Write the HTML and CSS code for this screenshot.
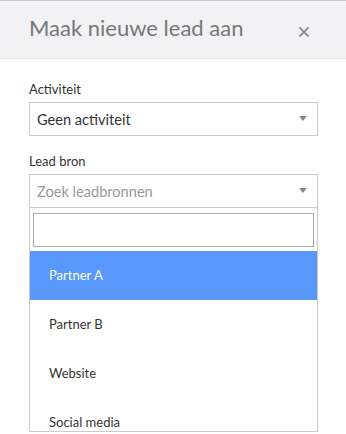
FILE: index.html
```html
<!DOCTYPE html>
<html lang="nl">
<head>
<meta charset="utf-8">
<title>Maak nieuwe lead aan</title>
<link rel="stylesheet" href="styles.css">
</head>
<body>
<div class="modal">
  <header class="modal-header">
    <h1 class="modal-title">Maak nieuwe lead aan</h1>
    <button class="close" aria-label="Sluiten">
      <svg width="12" height="12" viewBox="0 0 12 12"><path d="M1.5 1.5 L10.5 10.5 M10.5 1.5 L1.5 10.5" stroke="#7a7a7a" stroke-width="1.5" fill="none"/></svg>
    </button>
  </header>
  <div class="modal-body">
    <label class="field-label">Activiteit</label>
    <div class="select">
      <span class="select-text">Geen activiteit</span>
      <span class="arrow"></span>
    </div>

    <label class="field-label second">Lead bron</label>
    <div class="select open">
      <span class="select-text placeholder">Zoek leadbronnen</span>
      <span class="arrow"></span>
    </div>
    <div class="dropdown">
      <div class="search-wrap"><input class="search" type="text"></div>
      <ul class="results">
        <li class="result highlighted">Partner A</li>
        <li class="result">Partner B</li>
        <li class="result">Website</li>
        <li class="result">Social media</li>
      </ul>
    </div>
  </div>
</div>
</body>
</html>
```

FILE: styles.css
```css
* { box-sizing: border-box; }
html, body { margin: 0; padding: 0; background: #fff; }
body { font-family: Lato, "Open Sans", sans-serif; color: #333; width: 346px; height: 434px; overflow: hidden; }

.modal-header {
  height: 59px;
  background: #f2f2f4;
  border-top: 1px solid #c9c9cb;
  border-bottom: 1px solid #e4e4e6;
  display: flex;
  align-items: flex-start;
  justify-content: space-between;
  padding: 14px 0 0 29px;
}
.modal-title {
  margin: 0;
  font-size: 22px;
  line-height: 26px;
  font-weight: 400;
  color: #777;
}
.close {
  border: 0;
  background: transparent;
  padding: 0;
  margin: 11px 36px 0 0;
  width: 12px;
  height: 12px;
  display: flex;
}

.modal-body { padding: 21px 28px 0 29px; }

.field-label {
  display: block;
  font-size: 13px;
  line-height: 18px;
  margin-bottom: 4px;
  color: #333;
}
.field-label.second { margin-top: 16px; }

.select {
  height: 34px;
  border: 1px solid #ccc;
  display: flex;
  align-items: center;
  justify-content: space-between;
  padding: 0 10px 0 7px;
}
.select-text { font-size: 14.6px; color: #333; }
.select-text.placeholder { color: #999; }
.arrow {
  width: 0; height: 0;
  border-left: 4px solid transparent;
  border-right: 4px solid transparent;
  border-top: 5px solid #888;
  margin-top: -2px;
}

.dropdown {
  border: 1px solid #ccc;
  border-top: 0;
}
.search-wrap { padding: 5px 3px 4px; }
.search {
  display: block;
  width: 100%;
  height: 34px;
  border: 1px solid #aaa;
  margin: 0;
  padding: 0 5px;
  font: inherit;
  outline: none;
}
.results {
  list-style: none;
  margin: 0;
  padding: 0;
  height: 180px;
  overflow: hidden;
}
.result {
  height: 49px;
  line-height: 49px;
  padding-left: 19px;
  font-size: 13px;
  color: #333;
}
.result.highlighted { background: #5897fb; color: #fff; }
```
